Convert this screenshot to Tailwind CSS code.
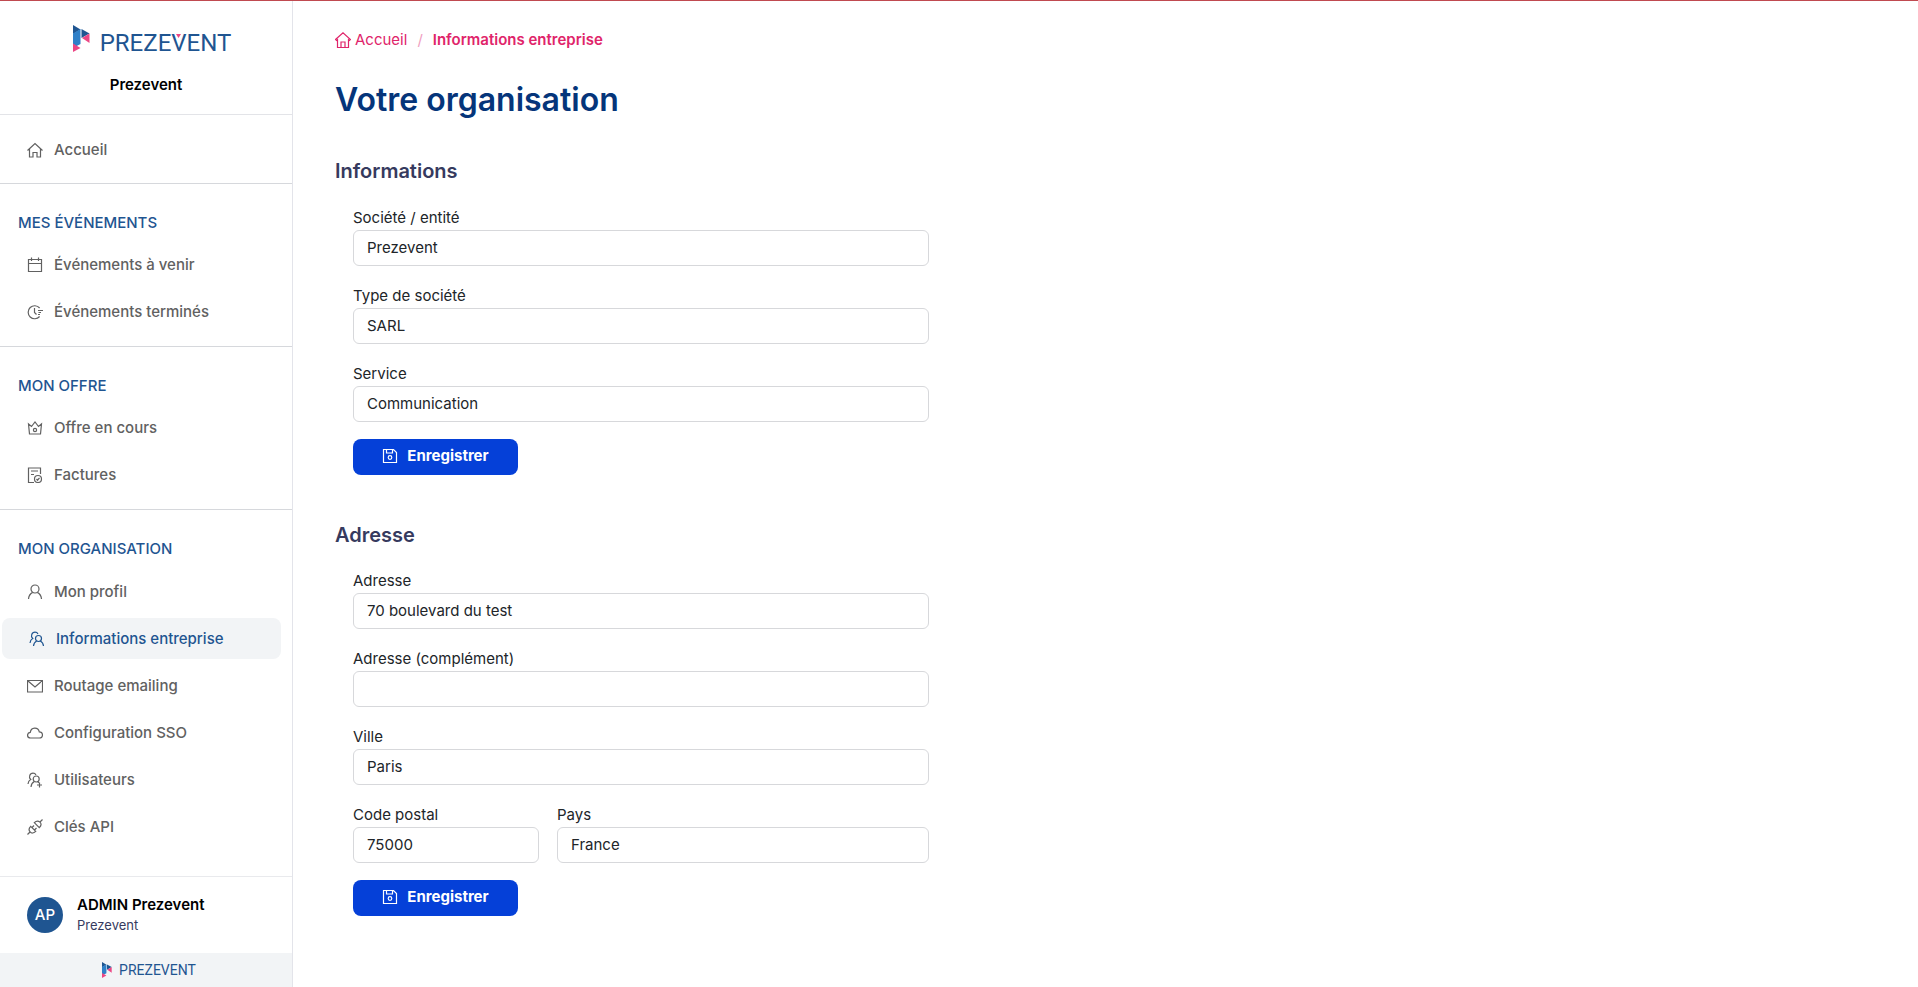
<!DOCTYPE html>
<html lang="fr">
<head>
<meta charset="utf-8">
<title>Prezevent - Votre organisation</title>
<meta name="viewport" content="width=device-width, initial-scale=1">
<script src="https://cdn.jsdelivr.net/npm/@tailwindcss/browser@4"></script>
</head>
<body class="bg-white font-['Inter',sans-serif] text-[15px] leading-6 text-[#212529]">
<svg class="hidden" aria-hidden="true">
  <defs>
    <symbol id="mark" viewBox="0 0 17 27">
      <path d="M0 0l7.500 4.500L0 9z" fill="#1f5591"/><path d="M0 8.500L7.500 4v15L0 23z" fill="#2f80c8"/><path d="M0 18.500l7.500 4.500L0 27z" fill="#ec4684"/>
      <path d="M8.500 4l8 4.500-8 4.500z" fill="#1f5591"/><path d="M16.500 8.500v9.500l-7.500-5z" fill="#ec4684"/>
    </symbol>
    <symbol id="home" viewBox="0 0 16 16"><path d="M.5 8.500L8 1.500l7.500 7M2.500 7v8h3.500V10.500h4V15h3.500V7"/></symbol>
    <symbol id="house" viewBox="0 0 16 16"><path d="M.5 7.500L8 .8l7.500 6.700-1 1-1-.8v7.800h-11V7.700l-1 .8zM6 15.500V10h4v5.500"/></symbol>
    <symbol id="calendar" viewBox="0 0 16 16"><path d="M1.500 2.500h13v12h-13zM1.500 6.500h13M4.500.5v3.500M11.500.5v3.500"/></symbol>
    <symbol id="clock" viewBox="0 0 16 16"><path d="M12.600 4A6.500 6.500 0 1 0 12.600 12.500M7.500 4v4.500l2 2M11 6.500h5M11.500 8.500h2.500M11 10.500h2"/></symbol>
    <symbol id="crown" viewBox="0 0 16 16"><path d="M1.500 4l3 2.500L8 2l3.500 4.500 3-2.500-1 10h-11z"/><circle cx="8" cy="10" r="1.600"/></symbol>
    <symbol id="invoice" viewBox="0 0 16 16"><path d="M7 15.500H1.500V1h12v6M4 4h7M4 7.500h3"/><circle cx="11" cy="12" r="3.500"/><path d="M9.500 12l1 1.200 2-2.400"/></symbol>
    <symbol id="user" viewBox="0 0 16 16"><circle cx="8" cy="5" r="4"/><path d="M1.500 15c.3-3.500 2-5.500 4.200-6.600M14.500 15c-.3-3.500-2-5.500-4.200-6.600"/></symbol>
    <symbol id="users" viewBox="0 0 16 16"><circle cx="9.500" cy="7.500" r="3"/><path d="M4.500 15c.2-2.300 1.300-4 3.200-5M14.500 15c-.2-2.300-1.300-4-3.200-5M1 12c.2-2.500 1.200-3.800 2.700-4.500C1.300 5.500 2.700 1.200 6 1.200c1.400 0 2.400.6 3 1.800"/></symbol>
    <symbol id="users-plus" viewBox="0 0 16 16"><circle cx="9.200" cy="7" r="3"/><path d="M4 15c.2-2.500 1.300-4.500 3.200-5.400M1 12c.2-2.500 1.200-3.800 2.700-4.500C1.300 5.500 2.700 1.200 6 1.200c1.400 0 2.400.6 3 1.800M10.700 9.700l1.300 1M12.500 10.500v5M10 13h5"/></symbol>
    <symbol id="mail" viewBox="0 0 16 16"><path d="M.5 2.500h15v11.500H.5zM1 3l7 6 7-6"/></symbol>
    <symbol id="cloud" viewBox="0 0 16 16"><path d="M3.500 13C-.4 13-.4 7.700 3.300 7.300 4 2 11 1.600 12.300 6.800c4.200.2 4.200 6.200 0 6.200z"/></symbol>
    <symbol id="plug" viewBox="0 0 16 16"><path d="M7.300 3.700L12.300 8.700C14.500 6.500 14.500 4.500 12.900 3.100S9.500 1.500 7.300 3.700zM3.700 7.300l5 5c-2.200 2.200-4.200 2.200-5.600.6s-1.600-3.400.6-5.600zM13 3l2.500-2.500M3 13L.5 15.500M5 8.500L7 6.500M7.500 11l2-2"/></symbol>
    <symbol id="save" viewBox="0 0 16 16"><path d="M1.500 1.500h10l3 3v10h-13zM4.500 1.500V5h6V1.500"/><circle cx="8" cy="9.500" r="1.800"/></symbol>
  </defs>
</svg>

<div class="flex min-h-screen border-t border-[#c04a50]">
  <aside class="flex w-[293px] shrink-0 flex-col border-r border-[#e3e4ea]">
    <div class="flex flex-col items-center border-b border-[#e3e4e8] pt-[24px] pb-[17px]">
      <a href="#" class="flex items-start gap-[10px] pl-[12px]" aria-label="Prezevent">
        <svg class="h-[27px] w-[17px]"><use href="#mark"/></svg>
        <span class="relative pt-[5px] font-['Roboto',sans-serif] text-[24px] leading-[26px] text-[#1f5591]">PREZEVENT
          <svg class="absolute top-[9px] left-[76px] h-[4px] w-[5px]" viewBox="0 0 5 4"><path d="M0 0h5L2.500 4z" fill="#ec4684"/></svg>
        </span>
      </a>
      <p class="mt-[17px] font-semibold text-black">Prezevent</p>
    </div>

    <nav class="flex flex-1 flex-col font-medium text-[#616161] [&_svg]:size-4 [&_svg]:fill-none [&_svg]:stroke-current [&_svg]:stroke-[1.2]">
      <div class="border-b border-[#d6d8dc] pt-[14px] pb-[13px]">
        <a href="#" class="flex h-[41px] items-center gap-[11px] pl-[27px]"><svg><use href="#home"/></svg>Accueil</a>
      </div>
      <section class="border-b border-[#d6d8dc] pt-[27px] pb-[14px]">
        <h2 class="mb-[9px] pl-[18px] text-[#1f5591]">MES ÉVÉNEMENTS</h2>
        <div class="flex flex-col gap-[6px]">
          <a href="#" class="flex h-[41px] items-center gap-[11px] pl-[27px]"><svg><use href="#calendar"/></svg>Événements à venir</a>
          <a href="#" class="flex h-[41px] items-center gap-[11px] pl-[27px]"><svg><use href="#clock"/></svg>Événements terminés</a>
        </div>
      </section>
      <section class="border-b border-[#d6d8dc] pt-[27px] pb-[14px]">
        <h2 class="mb-[9px] pl-[18px] text-[#1f5591]">MON OFFRE</h2>
        <div class="flex flex-col gap-[6px]">
          <a href="#" class="flex h-[41px] items-center gap-[11px] pl-[27px]"><svg><use href="#crown"/></svg>Offre en cours</a>
          <a href="#" class="flex h-[41px] items-center gap-[11px] pl-[27px]"><svg><use href="#invoice"/></svg>Factures</a>
        </div>
      </section>
      <section class="pt-[27px] pb-[14px]">
        <h2 class="mb-[10px] pl-[18px] text-[#1f5591]">MON ORGANISATION</h2>
        <div class="flex flex-col gap-[6px]">
          <a href="#" class="flex h-[41px] items-center gap-[11px] pl-[27px]"><svg><use href="#user"/></svg>Mon profil</a>
          <a href="#" aria-current="page" class="mr-[11px] ml-[2px] flex h-[41px] items-center gap-[11px] rounded-lg bg-[#f2f4f6] pl-[27px] text-[#1f5591]"><svg><use href="#users"/></svg>Informations entreprise</a>
          <a href="#" class="flex h-[41px] items-center gap-[11px] pl-[27px]"><svg><use href="#mail"/></svg>Routage emailing</a>
          <a href="#" class="flex h-[41px] items-center gap-[11px] pl-[27px]"><svg><use href="#cloud"/></svg>Configuration SSO</a>
          <a href="#" class="flex h-[41px] items-center gap-[11px] pl-[27px]"><svg><use href="#users-plus"/></svg>Utilisateurs</a>
          <a href="#" class="flex h-[41px] items-center gap-[11px] pl-[27px]"><svg><use href="#plug"/></svg>Clés API</a>
        </div>
      </section>
    </nav>

    <div class="flex items-center gap-[14px] border-t border-[#e9eaed] py-[18px] pl-[27px]">
      <span class="flex size-[36px] items-center justify-center rounded-full bg-[#1f5591] font-medium text-white">AP</span>
      <div>
        <p class="leading-[20px] font-semibold text-black">ADMIN Prezevent</p>
        <p class="text-[13px] leading-[20px] text-[#363a5e]">Prezevent</p>
      </div>
    </div>
    <div class="flex h-[34px] items-center justify-center gap-[7px] bg-[#f2f4f6] pl-[6px]">
      <svg class="h-[16px] w-[10px]"><use href="#mark"/></svg>
      <span class="font-['Roboto',sans-serif] text-[14px] leading-[20px] text-[#1f5591]">PREZEVENT</span>
    </div>
  </aside>

  <main class="min-w-0 flex-1 pt-[27px] pr-[42px] pl-[42px]">
    <nav aria-label="Fil d'Ariane" class="flex items-center text-[#e0246a]">
      <a href="#" class="flex items-center gap-[4px]"><svg class="size-4 fill-none stroke-current stroke-[1.2]"><use href="#house"/></svg>Accueil</a>
      <span class="px-[10px] text-[#f0a0bf]">/</span>
      <span class="font-semibold">Informations entreprise</span>
    </nav>
    <h1 class="mt-[24px] text-[32px] leading-[48px] font-semibold text-[#05357a]">Votre organisation</h1>

    <section class="mt-[32px]">
      <h2 class="text-[20px] leading-[30px] font-semibold text-[#363a5e]">Informations</h2>
      <form class="mt-[20px] ml-[18px] max-w-xl">
        <div class="flex flex-col gap-[18px]">
          <div><label for="societe" class="block">Société / entité</label>
            <input id="societe" value="Prezevent" class="block h-[36px] w-full rounded-md border border-[#d7d8db] px-[13px] pb-[2px]"></div>
          <div><label for="type" class="block">Type de société</label>
            <input id="type" value="SARL" class="block h-[36px] w-full rounded-md border border-[#d7d8db] px-[13px] pb-[2px]"></div>
          <div><label for="service" class="block">Service</label>
            <input id="service" value="Communication" class="block h-[36px] w-full rounded-md border border-[#d7d8db] px-[13px] pb-[2px]"></div>
        </div>
        <button type="button" class="mt-[17px] flex h-[36px] w-[165px] items-center justify-center gap-[9px] rounded-lg bg-[#0540d8] pb-[2px] font-bold text-white"><svg class="size-4 fill-none stroke-current stroke-[1.2]"><use href="#save"/></svg>Enregistrer</button>
      </form>
    </section>

    <section class="mt-[45px]">
      <h2 class="text-[20px] leading-[30px] font-semibold text-[#363a5e]">Adresse</h2>
      <form class="mt-[19px] ml-[18px] max-w-xl">
        <div class="flex flex-col gap-[18px]">
          <div><label for="adresse" class="block">Adresse</label>
            <input id="adresse" value="70 boulevard du test" class="block h-[36px] w-full rounded-md border border-[#d7d8db] px-[13px] pb-[2px]"></div>
          <div><label for="complement" class="block">Adresse (complément)</label>
            <input id="complement" value="" class="block h-[36px] w-full rounded-md border border-[#d7d8db] px-[13px] pb-[2px]"></div>
          <div><label for="ville" class="block">Ville</label>
            <input id="ville" value="Paris" class="block h-[36px] w-full rounded-md border border-[#d7d8db] px-[13px] pb-[2px]"></div>
          <div class="grid grid-cols-[1fr_2fr] gap-[18px]">
            <div><label for="cp" class="block">Code postal</label>
              <input id="cp" value="75000" class="block h-[36px] w-full rounded-md border border-[#d7d8db] px-[13px] pb-[2px]"></div>
            <div><label for="pays" class="block">Pays</label>
              <input id="pays" value="France" class="block h-[36px] w-full rounded-md border border-[#d7d8db] px-[13px] pb-[2px]"></div>
          </div>
        </div>
        <button type="button" class="mt-[17px] flex h-[36px] w-[165px] items-center justify-center gap-[9px] rounded-lg bg-[#0540d8] pb-[2px] font-bold text-white"><svg class="size-4 fill-none stroke-current stroke-[1.2]"><use href="#save"/></svg>Enregistrer</button>
      </form>
    </section>
  </main>
</div>
</body>
</html>
